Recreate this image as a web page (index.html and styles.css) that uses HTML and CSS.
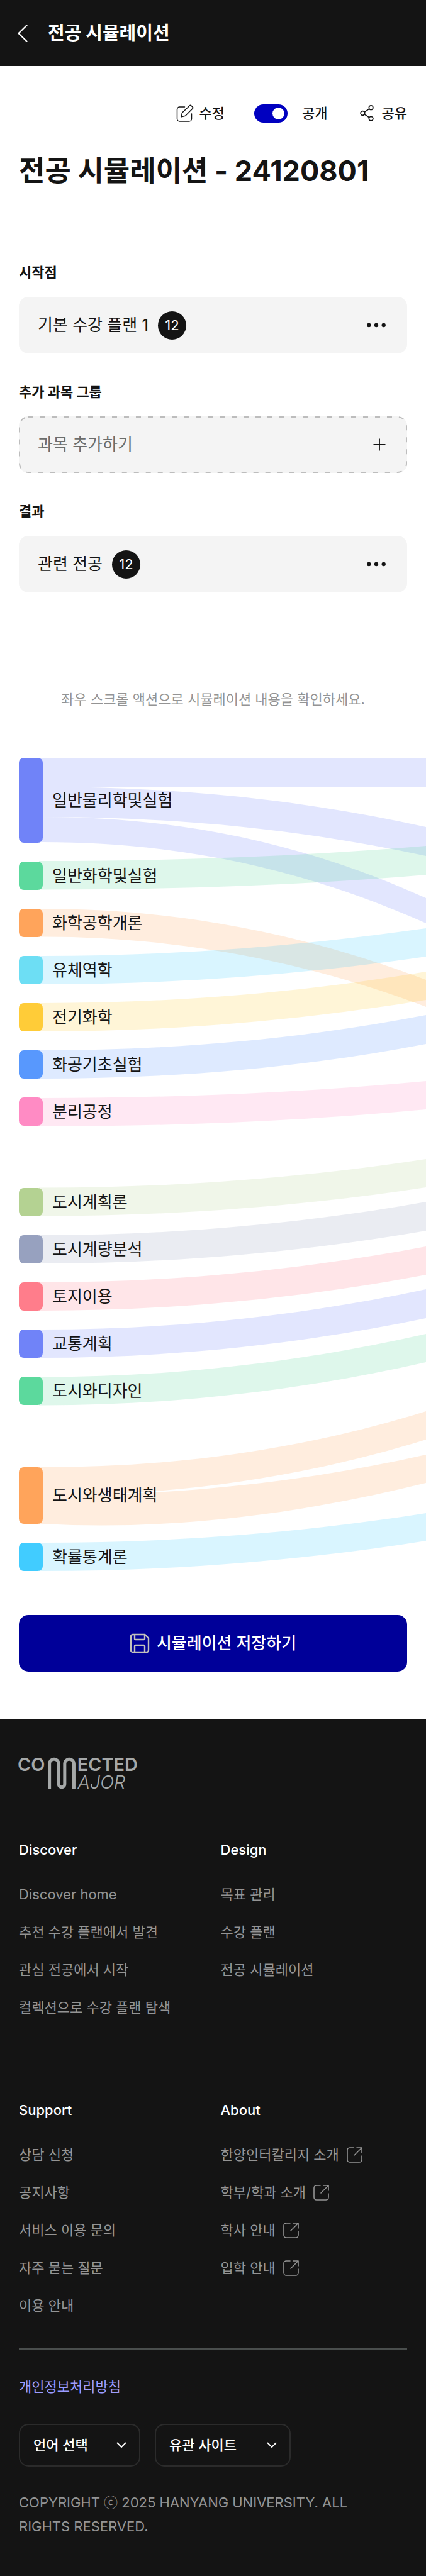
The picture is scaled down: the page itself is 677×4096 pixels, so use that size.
FILE: index.html
```html
<!DOCTYPE html>
<html lang="ko">
<head>
<meta charset="utf-8">
<meta name="viewport" content="width=device-width, initial-scale=1">
<title>전공 시뮬레이션</title>
<link rel="stylesheet" href="styles.css">
</head>
<body>
<svg class="sprite" aria-hidden="true">
  <symbol id="icon-external" viewBox="0 0 25 25">
    <path d="M11 1H5a4 4 0 0 0-4 4v15a4 4 0 0 0 4 4h15a4 4 0 0 0 4-4v-6M16 1h8v8M24 1L12 13" fill="none" stroke="currentColor" stroke-width="1.6" stroke-linejoin="round" stroke-linecap="round"/>
  </symbol>
  <symbol id="icon-more" viewBox="0 0 30 8">
    <g fill="currentColor"><circle cx="3.3" cy="4" r="3.2"/><circle cx="15" cy="4" r="3.2"/><circle cx="26.7" cy="4" r="3.2"/></g>
  </symbol>
  <symbol id="icon-down" viewBox="0 0 16 10">
    <path d="M1.5 1.5L8 8l6.500-6.500" fill="none" stroke="currentColor" stroke-width="1.900" stroke-linecap="round" stroke-linejoin="round"/>
  </symbol>
</svg>

<header class="topbar">
  <button class="back" type="button" aria-label="뒤로">
    <svg viewBox="0 0 16 28" aria-hidden="true"><path d="M14.500 1.200L1.500 14l13 12.800" fill="none" stroke="currentColor" stroke-width="2.200" stroke-linecap="round" stroke-linejoin="round"/></svg>
  </button>
  <span class="topbar-title">전공 시뮬레이션</span>
</header>

<main>
  <div class="intro">
    <div class="actions">
      <button class="action" type="button">
        <svg class="icon-edit" viewBox="0 0 28 28" aria-hidden="true"><path d="M13.500 4H5.500A4 4 0 0 0 1.500 8v15a4 4 0 0 0 4 4h15a4 4 0 0 0 4-4v-8M21.600 1.700a1.400 1.400 0 0 1 2 0l2.700 2.700a1.400 1.400 0 0 1 0 2L14.500 18.200l-6 1.500.8-6.200z" fill="none" stroke="currentColor" stroke-width="1.500" stroke-linecap="round" stroke-linejoin="round"/></svg>
        <span>수정</span>
      </button>
      <label class="action action-toggle">
        <input class="toggle" type="checkbox" checked>
        <span>공개</span>
      </label>
      <button class="action action-share" type="button">
        <svg class="icon-share" viewBox="0 0 22 26" aria-hidden="true"><g fill="none" stroke="currentColor" stroke-width="1.700"><circle cx="4.400" cy="13" r="3.300"/><circle cx="17.600" cy="4.200" r="3.300"/><circle cx="17.600" cy="21.800" r="3.300"/><path d="M7.200 11.200l7.600-5.100M7.200 14.800l7.600 5.100"/></g></svg>
        <span>공유</span>
      </button>
    </div>
    <h1 class="title">전공 시뮬레이션 - 24120801</h1>
  </div>

  <div class="sections">
    <section class="section">
      <h2 class="label">시작점</h2>
      <div class="card">
        <span>기본 수강 플랜 1</span><span class="badge">12</span>
        <button class="card-btn" type="button" aria-label="더보기"><svg class="icon-more"><use href="#icon-more"/></svg></button>
      </div>
    </section>
    <section class="section">
      <h2 class="label">추가 과목 그룹</h2>
      <button class="card card-add" type="button">
        <svg class="dash" aria-hidden="true"><rect class="dash-rect" x="1" y="1" rx="14"/></svg>
        <span>과목 추가하기</span>
        <svg class="icon-plus" viewBox="0 0 20 20" aria-hidden="true"><path d="M10 .5v19M.5 10h19" stroke="currentColor" stroke-width="1.800"/></svg>
      </button>
    </section>
    <section class="section">
      <h2 class="label">결과</h2>
      <div class="card">
        <span>관련 전공</span><span class="badge">12</span>
        <button class="card-btn" type="button" aria-label="더보기"><svg class="icon-more"><use href="#icon-more"/></svg></button>
      </div>
    </section>
  </div>

  <p class="note">좌우 스크롤 액션으로 시뮬레이션 내용을 확인하세요.</p>

  <div class="chart">
    <svg class="ribbons" viewBox="0 0 677 1293" preserveAspectRatio="none" aria-hidden="true">
      <g class="violet">
        <path d="M62 1H677V46H62z"/>
        <path d="M62 46H68C271 46 474 65 677 110V156C474 112 271 94 68 94H62z"/>
        <path d="M62 94H68C271 94 474 131 677 223V263C474 172 271 134 68 134H62z"/>
      </g>
      <path class="green" d="M62 164H68C271 164 474 157 677 140V186C474 203 271 209.500 68 209.500H62z"/>
      <path class="orange" d="M62 240H68C271 240 474 276 677 353V396C474 319 271 284.500 68 284.500H62z"/>
      <path class="sky" d="M62 315H68C271 315 474 300 677 271V316C474 346 271 360 68 360H62z"/>
      <path class="yellow" d="M62 390H68C271 390 474 374 677 340V385C474 418 271 435 68 435H62z"/>
      <path class="blue" d="M62 465H68C271 465 474 448 677 409V455C474 494 271 510 68 510H62z"/>
      <path class="pink" d="M62 541H68C271 541 474 533 677 514V559C474 578 271 586 68 586H62z"/>
      <path class="moss" d="M62 683.500H68C271 683.500 474 669 677 638V683C474 714 271 728.500 68 728.500H62z"/>
      <path class="slate" d="M62 759H68C271 759 474 742 677 706V752C474 787 271 804 68 804H62z"/>
      <path class="rose" d="M62 834H68C271 834 474 815 677 777V822C474 860 271 879 68 879H62z"/>
      <path class="violet" d="M62 909H68C271 909 474 888 677 845V891C474 933 271 954 68 954H62z"/>
      <path class="green" d="M62 984.500H68C271 984.500 474 962 677 916V961C474 1007 271 1029.500 68 1029.500H62z"/>
      <g class="orange">
        <path d="M62 1128H68C271 1128 474 1102 677 1039V1084C474 1147 271 1173 68 1173H62z"/>
        <path d="M62 1173H68C271 1173 474 1154 677 1108V1153C474 1203 271 1229 68 1218H62z"/>
      </g>
      <path class="sky" d="M62 1248H68C271 1248 474 1233 677 1201V1245C474 1277 271 1293 68 1293H62z"/>
    </svg>
    <ul class="group">
      <li class="node node-triple"><i class="swatch bg-violet"></i>일반물리학및실험</li>
      <li class="node"><i class="swatch bg-green"></i>일반화학및실험</li>
      <li class="node"><i class="swatch bg-orange"></i>화학공학개론</li>
      <li class="node"><i class="swatch bg-aqua"></i>유체역학</li>
      <li class="node"><i class="swatch bg-yellow"></i>전기화학</li>
      <li class="node"><i class="swatch bg-blue"></i>화공기초실험</li>
      <li class="node"><i class="swatch bg-pink"></i>분리공정</li>
    </ul>
    <ul class="group">
      <li class="node"><i class="swatch bg-moss"></i>도시계획론</li>
      <li class="node"><i class="swatch bg-slate"></i>도시계량분석</li>
      <li class="node"><i class="swatch bg-rose"></i>토지이용</li>
      <li class="node"><i class="swatch bg-violet"></i>교통계획</li>
      <li class="node"><i class="swatch bg-green"></i>도시와디자인</li>
    </ul>
    <ul class="group">
      <li class="node node-double"><i class="swatch bg-orange"></i>도시와생태계획</li>
      <li class="node"><i class="swatch bg-sky"></i>확률통계론</li>
    </ul>
  </div>

  <div class="save-row">
    <button class="save" type="button">
      <svg class="icon-save" viewBox="0 0 32 32" aria-hidden="true"><path d="M5 2h19.500L30 8v19a3 3 0 0 1-3 3H5a3 3 0 0 1-3-3V5a3 3 0 0 1 3-3zM8 2v6.500a1.500 1.500 0 0 0 1.500 1.500h13A1.500 1.500 0 0 0 24 8.500V2M8 30V20.500A1.500 1.500 0 0 1 9.500 19h13a1.500 1.500 0 0 1 1.500 1.500V30" fill="none" stroke="currentColor" stroke-width="2.400" stroke-linejoin="round"/></svg>
      <span>시뮬레이션 저장하기</span>
    </button>
  </div>
</main>

<footer class="footer">
  <svg class="logo" viewBox="28 50 896 242" role="img" aria-label="Connected Major">
    <text class="logo-bold" x="19" y="152">CO</text>
    <path d="M261 288V99a35 35 0 0 1 70 0V255a23 23 0 0 0 46 0V99a35 35 0 0 1 70 0V288" fill="none" stroke="currentColor" stroke-width="24"/>
    <text class="logo-bold" x="473" y="152">ECTED</text>
    <text class="logo-thin" x="476" y="290">AJOR</text>
  </svg>
  <nav class="links">
    <div class="col">
      <h3 class="col-title">Discover</h3>
      <a href="#">Discover home</a>
      <a href="#">추천 수강 플랜에서 발견</a>
      <a href="#">관심 전공에서 시작</a>
      <a href="#">컬렉션으로 수강 플랜 탐색</a>
    </div>
    <div class="col">
      <h3 class="col-title">Design</h3>
      <a href="#">목표 관리</a>
      <a href="#">수강 플랜</a>
      <a href="#">전공 시뮬레이션</a>
    </div>
    <div class="col">
      <h3 class="col-title">Support</h3>
      <a href="#">상담 신청</a>
      <a href="#">공지사항</a>
      <a href="#">서비스 이용 문의</a>
      <a href="#">자주 묻는 질문</a>
      <a href="#">이용 안내</a>
    </div>
    <div class="col">
      <h3 class="col-title">About</h3>
      <a href="#">한양인터칼리지 소개<svg class="icon-external"><use href="#icon-external"/></svg></a>
      <a href="#">학부/학과 소개<svg class="icon-external"><use href="#icon-external"/></svg></a>
      <a href="#">학사 안내<svg class="icon-external"><use href="#icon-external"/></svg></a>
      <a href="#">입학 안내<svg class="icon-external"><use href="#icon-external"/></svg></a>
    </div>
  </nav>
  <hr class="rule">
  <a class="privacy" href="#">개인정보처리방침</a>
  <div class="selects">
    <div class="select-wrap">
      <select class="select select-lang" aria-label="언어 선택"><option>언어 선택</option></select>
      <svg class="icon-down"><use href="#icon-down"/></svg>
    </div>
    <div class="select-wrap">
      <select class="select select-site" aria-label="유관 사이트"><option>유관 사이트</option></select>
      <svg class="icon-down"><use href="#icon-down"/></svg>
    </div>
  </div>
  <p class="copyright">COPYRIGHT ⓒ 2025 HANYANG UNIVERSITY. ALL RIGHTS RESERVED.</p>
</footer>
</body>
</html>
```
FILE: styles.css
```css
* { box-sizing: border-box; margin: 0; padding: 0; }

body {
  background: #fff;
  color: #141414;
  font-family: Inter, "Noto Sans CJK KR", sans-serif;
  font-size: 22px;
}

button, select, input { font: inherit; color: inherit; background: none; border: 0; }
a { color: inherit; text-decoration: none; }
ul { list-style: none; }
svg { display: block; flex: none; }
.sprite { position: absolute; width: 0; height: 0; }

/* Top bar */
.topbar {
  display: flex;
  align-items: center;
  height: 105px;
  padding: 0 28px;
  gap: 32px;
  background: #141414;
  color: #fff;
}
.back svg { width: 16px; height: 28px; }
.topbar-title { font-size: 29px; line-height: 36px; font-weight: 700; }

/* Title and actions */
.intro { padding: 60px 30px 0; }
.actions { display: flex; justify-content: flex-end; align-items: center; height: 30px; font-weight: 500; }
.action { display: flex; align-items: center; gap: 9px; line-height: 30px; }
.action-toggle { margin-left: 47px; gap: 23px; }
.action-share { margin-left: 51px; gap: 13px; }
.icon-edit { width: 28px; height: 28px; }
.icon-share { width: 22px; height: 26px; }
.toggle {
  appearance: none;
  display: flex;
  justify-content: flex-end;
  align-items: center;
  width: 53px;
  height: 29px;
  padding: 5px;
  border-radius: 15px;
  background: #0000c0;
}
.toggle::before { content: ""; width: 19px; height: 19px; border-radius: 50%; background: #fff; }
.title { margin-top: 50px; font-size: 45px; line-height: 54px; font-weight: 700; }

/* Cards */
.sections { display: grid; gap: 46px; padding: 119px 30px 0; }
.label { font-size: 22px; line-height: 30px; font-weight: 700; margin-bottom: 24px; }
.card {
  display: flex;
  align-items: center;
  position: relative;
  width: 100%;
  height: 90px;
  padding: 0 34px 0 30px;
  border-radius: 15px;
  background: #f4f4f4;
  font-size: 26px;
  line-height: 36px;
}
.badge {
  display: grid;
  place-items: center;
  width: 45px;
  height: 45px;
  margin-left: 15px;
  border-radius: 50%;
  background: #141414;
  color: #fff;
  font-size: 22px;
}
.card-btn { margin-left: auto; }
.icon-more { width: 30px; height: 8px; }
.card-add { justify-content: space-between; color: #6b6d6c; }
.icon-plus { width: 20px; height: 20px; color: #141414; }
.dash { position: absolute; left: 0; top: 0; width: 100%; height: 100%; }
.dash-rect {
  width: calc(100% - 2px);
  height: calc(100% - 2px);
  fill: none;
  stroke: #bdbdbd;
  stroke-width: 2px;
  stroke-dasharray: 8 11;
}

.note { padding: 155px 30px 78px; text-align: center; line-height: 30px; color: #949494; }

/* Flow chart */
.chart { position: relative; display: grid; gap: 99px; padding: 0 30px; }
.ribbons { position: absolute; left: 0; top: 0; width: 100%; height: 100%; fill-opacity: .2; }
.group { position: relative; display: grid; gap: 30px; }
.node { display: flex; align-items: center; gap: 15px; height: 45px; font-size: 26px; line-height: 36px; }
.node-double { height: 90px; }
.node-triple { height: 135px; }
.swatch { width: 38px; height: 100%; border-radius: 8px; }

.violet { fill: #7083f8; } .bg-violet { background: #7083f8; }
.green { fill: #5cd99d; } .bg-green { background: #5cd99d; }
.orange { fill: #ffa45b; } .bg-orange { background: #ffa45b; }
.sky { fill: #41ccff; } .bg-sky { background: #41ccff; }
.yellow { fill: #ffcc38; } .bg-yellow { background: #ffcc38; }
.blue { fill: #5898fd; } .bg-blue { background: #5898fd; }
.pink { fill: #ff8bc4; } .bg-pink { background: #ff8bc4; }
.moss { fill: #b4d292; } .bg-moss { background: #b4d292; }
.slate { fill: #97a1bf; } .bg-slate { background: #97a1bf; }
.rose { fill: #ff7d8b; } .bg-rose { background: #ff7d8b; }
.bg-aqua { background: #6ddef4; }

/* Save */
.save-row { padding: 70px 30px 75px; }
.save {
  display: flex;
  justify-content: center;
  align-items: center;
  gap: 11px;
  width: 100%;
  height: 90px;
  border-radius: 15px;
  background: #000099;
  color: #fff;
  font-size: 26px;
  line-height: 36px;
  font-weight: 500;
}
.icon-save { width: 32px; height: 32px; color: #c2c1bd; }

/* Footer */
.footer { padding: 61px 30px 60px; background: #141414; color: #949494; }
.logo { width: 187px; height: 51px; color: #a5a8a8; fill: currentColor; overflow: visible; }
.logo-bold { font-size: 138px; font-weight: 600; }
.logo-thin { font-size: 138px; font-weight: 300; font-style: italic; }
.links { display: grid; grid-template-columns: 1fr 1fr; gap: 127px 24px; margin-top: 78px; }
.col { display: flex; flex-direction: column; align-items: flex-start; gap: 24px; line-height: 36px; }
.col-title { margin-bottom: 11px; font-size: 22px; font-weight: 500; color: #fff; }
.col a { display: flex; align-items: center; gap: 12px; }
.icon-external { width: 25px; height: 25px; }
.rule { height: 2px; margin: 50px 0 41px; border: 0; background: #4a4e4d; }
.privacy { display: block; width: fit-content; line-height: 36px; color: #9c9cff; }
.selects { display: flex; gap: 23px; margin-top: 41px; }
.select-wrap { position: relative; }
.select {
  appearance: none;
  height: 68px;
  padding: 0 50px 0 21px;
  border: 2px solid #2b2b2b;
  border-radius: 15px;
  color: #fff;
  font-weight: 500;
}
.select-lang { width: 193px; }
.select-site { width: 216px; }
.select-wrap .icon-down { position: absolute; right: 22px; top: 29px; width: 16px; height: 10px; color: #fff; pointer-events: none; }
.copyright { margin-top: 38px; padding-right: 24px; line-height: 38px; }
```
